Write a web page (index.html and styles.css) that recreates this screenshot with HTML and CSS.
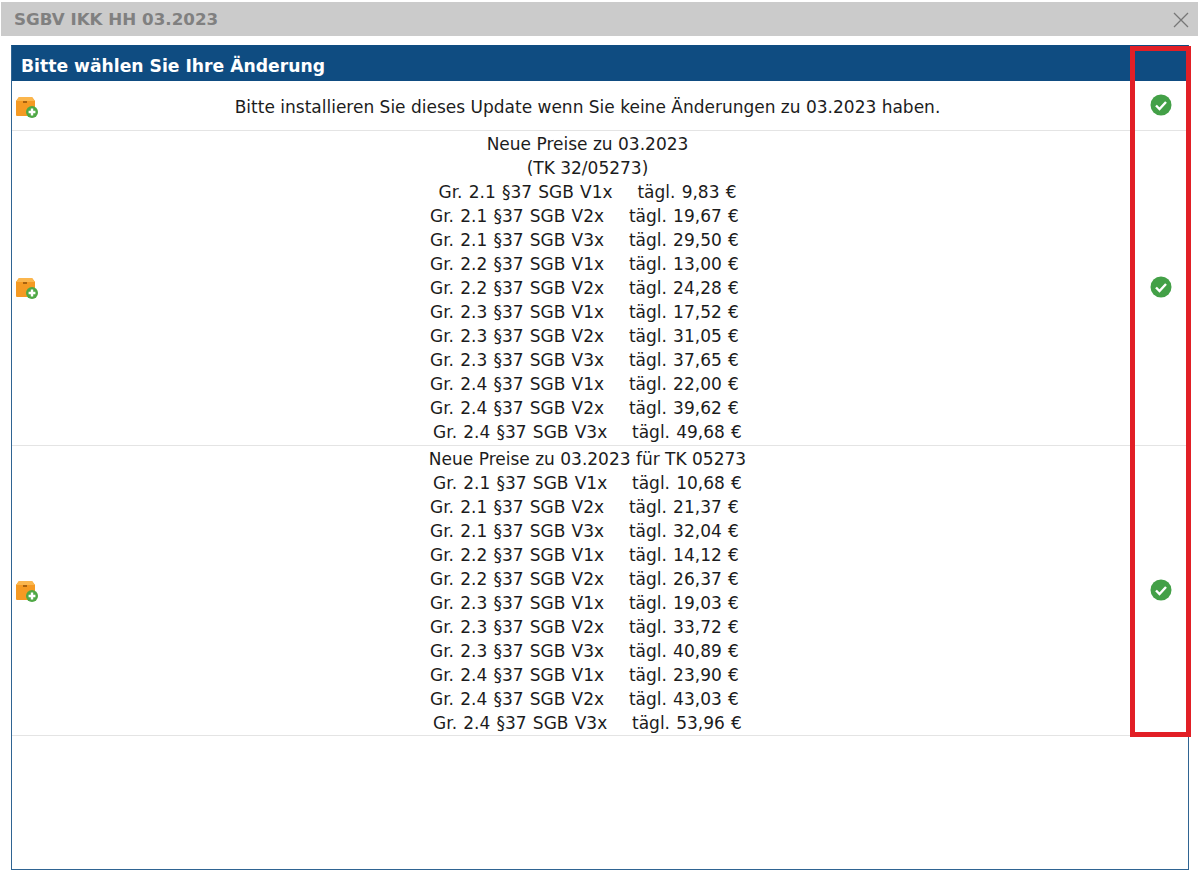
FILE: index.html
```html
<!DOCTYPE html>
<html lang="de">
<head>
<meta charset="utf-8">
<title>SGBV IKK HH 03.2023</title>
<link rel="stylesheet" href="styles.css">
</head>
<body>
<svg class="defs" width="0" height="0" aria-hidden="true">
  <symbol id="box" viewBox="0 0 22 22">
    <path d="M0 5 3 1H16L19 5V19Q19 20 18 20H1Q0 20 0 19Z" fill="#f59a23"/>
    <path d="M0 5 3 1H16L19 5Z" fill="#fbb64d"/>
    <rect x="7" y="5" width="4" height="2" fill="#a8620f"/>
    <circle cx="16" cy="16" r="6" fill="#4fa845"/>
    <path d="M16 12.600V19.400M12.600 16H19.400" stroke="#fff" stroke-width="2.400"/>
  </symbol>
  <symbol id="check" viewBox="0 0 22 22">
    <circle cx="11" cy="11" r="10.500" fill="#43a047"/>
    <path d="M6 11.500 9.500 15 16 8" fill="none" stroke="#fff" stroke-width="2.400"/>
  </symbol>
</svg>
<div class="titlebar">
  <span class="title">SGBV IKK HH 03.2023</span>
  <svg class="close" viewBox="0 0 16 16"><path d="M1 1 15 15M15 1 1 15" stroke="#777" stroke-width="1.300" fill="none"/></svg>
</div>
<main class="panel">
  <div class="panel-head">Bitte wählen Sie Ihre Änderung</div>
  <div class="row row-single">
    <svg class="box"><use href="#box"/></svg>
    <div class="text">Bitte installieren Sie dieses Update wenn Sie keine Änderungen zu 03.2023 haben.</div>
    <svg class="check"><use href="#check"/></svg>
  </div>
  <div class="row">
    <svg class="box"><use href="#box"/></svg>
    <div class="text">Neue Preise zu 03.2023
(TK 32/05273)
<span class="price">Gr. 2.1 §37 SGB V1x    tägl. 9,83 €</span>
<span class="price">Gr. 2.1 §37 SGB V2x    tägl. 19,67 € </span>
<span class="price">Gr. 2.1 §37 SGB V3x    tägl. 29,50 € </span>
<span class="price">Gr. 2.2 §37 SGB V1x    tägl. 13,00 € </span>
<span class="price">Gr. 2.2 §37 SGB V2x    tägl. 24,28 € </span>
<span class="price">Gr. 2.3 §37 SGB V1x    tägl. 17,52 € </span>
<span class="price">Gr. 2.3 §37 SGB V2x    tägl. 31,05 € </span>
<span class="price">Gr. 2.3 §37 SGB V3x    tägl. 37,65 € </span>
<span class="price">Gr. 2.4 §37 SGB V1x    tägl. 22,00 € </span>
<span class="price">Gr. 2.4 §37 SGB V2x    tägl. 39,62 € </span>
<span class="price">Gr. 2.4 §37 SGB V3x    tägl. 49,68 €</span></div>
    <svg class="check"><use href="#check"/></svg>
  </div>
  <div class="row row-third">
    <svg class="box"><use href="#box"/></svg>
    <div class="text">Neue Preise zu 03.2023 für TK 05273
<span class="price">Gr. 2.1 §37 SGB V1x    tägl. 10,68 €</span>
<span class="price">Gr. 2.1 §37 SGB V2x    tägl. 21,37 € </span>
<span class="price">Gr. 2.1 §37 SGB V3x    tägl. 32,04 € </span>
<span class="price">Gr. 2.2 §37 SGB V1x    tägl. 14,12 € </span>
<span class="price">Gr. 2.2 §37 SGB V2x    tägl. 26,37 € </span>
<span class="price">Gr. 2.3 §37 SGB V1x    tägl. 19,03 € </span>
<span class="price">Gr. 2.3 §37 SGB V2x    tägl. 33,72 € </span>
<span class="price">Gr. 2.3 §37 SGB V3x    tägl. 40,89 € </span>
<span class="price">Gr. 2.4 §37 SGB V1x    tägl. 23,90 € </span>
<span class="price">Gr. 2.4 §37 SGB V2x    tägl. 43,03 € </span>
<span class="price">Gr. 2.4 §37 SGB V3x    tägl. 53,96 €</span></div>
    <svg class="check"><use href="#check"/></svg>
  </div>
  <div class="marker"></div>
</main>
</body>
</html>
```

FILE: styles.css
```css
* { box-sizing: border-box; }
html, body { margin: 0; height: 880px; overflow: hidden; background: #fff; }
body {
  padding: 2px 2px 0 1px;
  font-family: "DejaVu Sans", sans-serif;
  color: #1c1c1c;
}
.defs { position: absolute; }
.titlebar {
  height: 34px;
  background: #cbcbcb;
  display: flex;
  align-items: center;
  justify-content: space-between;
  padding: 0 9px 0 13px;
}
.title { font-size: 16.700px; font-weight: bold; color: #808080; }
.close { width: 16px; height: 16px; margin-top: 1px; }
.panel {
  position: relative;
  margin: 9px 9px 0 10px;
  height: 825px;
  border: 1px solid #2f6492;
  border-top-color: #0f4c81;
}
.panel-head {
  height: 35px;
  background: #0f4c81;
  color: #fff;
  font-size: 17.200px;
  font-weight: bold;
  padding: 5px 0 0 9px;
  display: flex;
  align-items: center;
}
.row {
  display: flex;
  align-items: center;
  padding: 1px 16px 1px 4px;
  border-bottom: 1px solid #e4e4e4;
}
.row-single { height: 50px; padding-top: 2px; padding-bottom: 0; }
.row-third { padding-bottom: 0; }
.box { width: 22px; height: 22px; flex: none; }
.check { width: 22px; height: 22px; flex: none; margin-top: -3px; }
.text {
  flex: 1;
  padding-right: 43px;
  padding-left: 30px;
  text-align: center;
  font-size: 17px;
  line-height: 24px;
  white-space: pre;
}
.price { word-spacing: 0.8px; }
.marker {
  position: absolute;
  left: 1118px;
  top: 0;
  width: 61px;
  height: 691px;
  border: 5px solid #e21f26;
}
```
